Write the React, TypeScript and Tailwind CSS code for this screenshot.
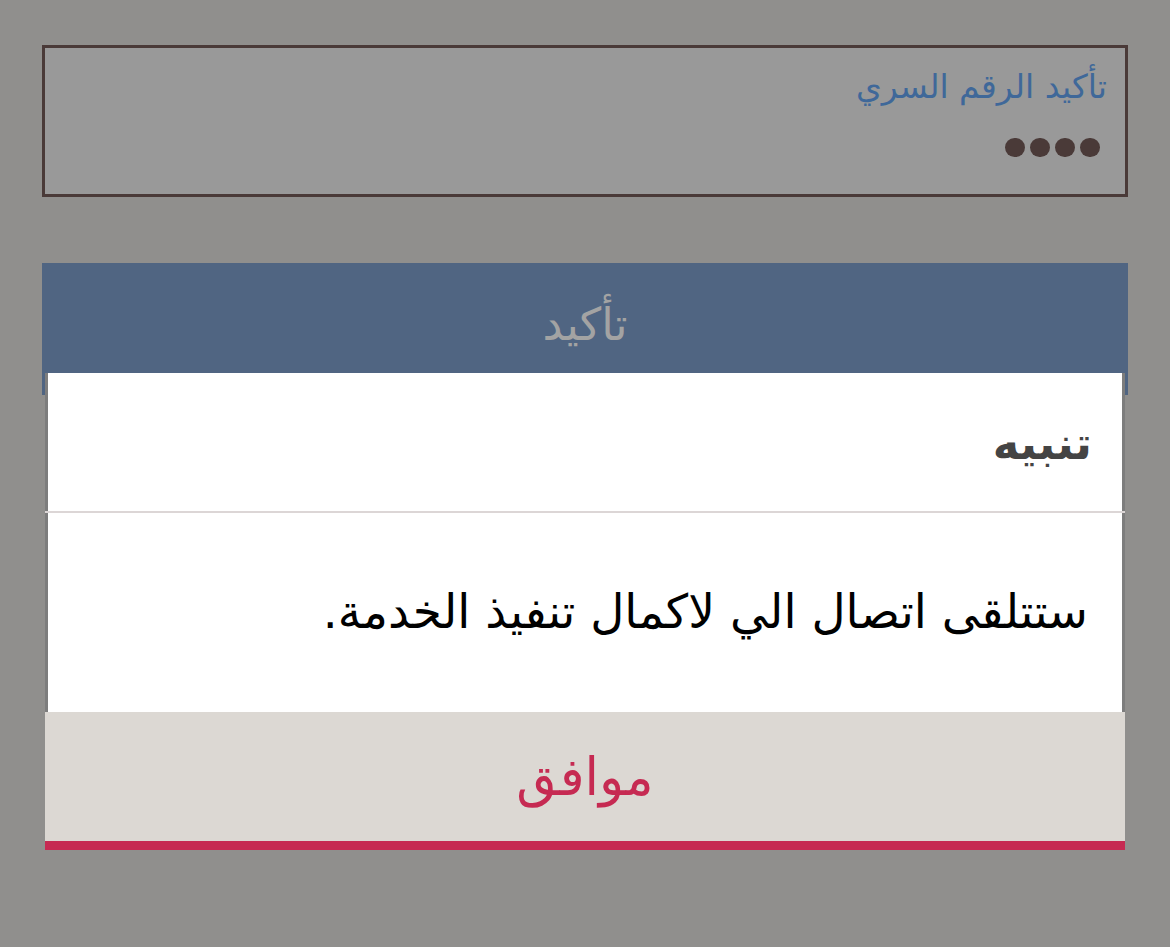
import React from "react";

export default function App() {
  const font = { fontFamily: '"DejaVu Sans", "Noto Sans", sans-serif' };
  return (
    <div dir="rtl" className="relative w-[1170px] h-[947px] bg-[#908f8d] overflow-hidden" style={font}>
      <div className="pt-[45px] px-[42px] flex flex-col">
        <div className="h-[152px] border-[3px] border-[#4a3a38] bg-[#999999] flex flex-col items-start pr-[18px] pt-[16px]">
          <div className="text-[33px] leading-[46px] text-[#3f6899]">تأكيد الرقم السري</div>
          <div className="mt-[28px] pr-[7px] flex gap-[5px]">
            <span className="w-[20px] h-[19px] rounded-full bg-[#4a3a38]" />
            <span className="w-[20px] h-[19px] rounded-full bg-[#4a3a38]" />
            <span className="w-[20px] h-[19px] rounded-full bg-[#4a3a38]" />
            <span className="w-[20px] h-[19px] rounded-full bg-[#4a3a38]" />
          </div>
        </div>
        <div className="mt-[66px] h-[132px] bg-[#506582] flex justify-center items-start pt-[34px]">
          <span className="text-[45px] leading-[56px] text-[#a3a3a3]">تأكيد</span>
        </div>
      </div>

      <div className="absolute left-[45px] top-[373px] w-[1080px] flex flex-col">
        <div className="h-[138px] bg-white border-x-[3px] border-[#7d7d7d] flex items-center pr-[30px] pt-[4px]">
          <span className="text-[45px] font-bold text-[#444444]">تنبيه</span>
        </div>
        <div className="h-[2px] bg-[#dcd6d6]" />
        <div className="h-[199px] bg-white border-x-[3px] border-[#7d7d7d] flex items-center pr-[34px]">
          <span className="text-[47px] text-black">ستتلقى اتصال الي لاكمال تنفيذ الخدمة.</span>
        </div>
        <div className="h-[129px] bg-[#dcd8d3] flex items-center justify-center">
          <span className="text-[52px] text-[#c62a52]">موافق</span>
        </div>
        <div className="h-[9px] bg-[#c62a52]" />
      </div>
    </div>
  );
}
